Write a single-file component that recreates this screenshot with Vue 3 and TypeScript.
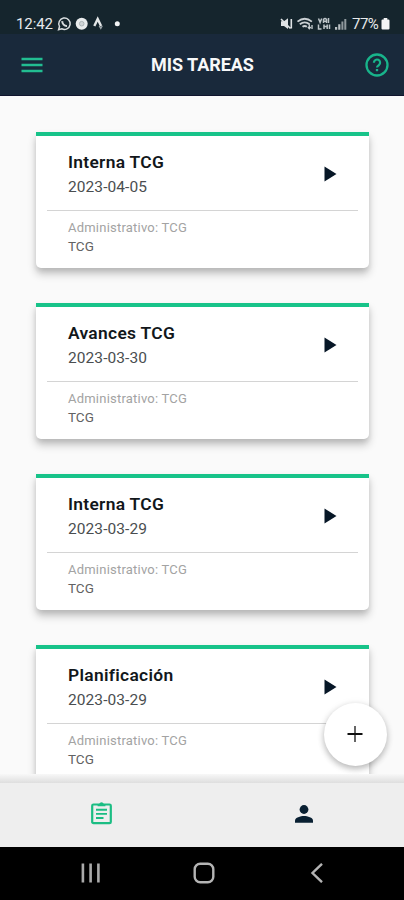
<script setup lang="ts">
interface Task {
  title: string
  date: string
  kind: string
  client: string
}

const tasks: Task[] = [
  { title: 'Interna TCG', date: '2023-04-05', kind: 'Administrativo: TCG', client: 'TCG' },
  { title: 'Avances TCG', date: '2023-03-30', kind: 'Administrativo: TCG', client: 'TCG' },
  { title: 'Interna TCG', date: '2023-03-29', kind: 'Administrativo: TCG', client: 'TCG' },
  { title: 'Planificación', date: '2023-03-29', kind: 'Administrativo: TCG', client: 'TCG' },
]
</script>

<template>
  <div class="screen">
    <div class="status">
      <span class="clock">12:42</span>
      <svg class="status-left" width="64" height="16" viewBox="0 0 64 16">
        <g fill="none" stroke="#d9dee0" stroke-width="1.5">
          <path d="M1.600 13.700l.9-3.200a5.700 5.700 0 1 1 2.200 2.200z" />
          <path d="M5.300 5.200c-.3 2.600 2.200 5 4.700 4.800" stroke-width="2" />
        </g>
        <circle cx="24.700" cy="7.700" r="6" fill="#e8ebec" />
        <circle cx="24.700" cy="7.700" r="2.300" fill="#d0d5d7" stroke="#a0a8ab" stroke-width=".8" />
        <path d="M37.300 10l3.400-7 3.400 7" fill="none" stroke="#e4e7e8" stroke-width="2.400" />
        <path d="M42.200 9.800l1.600 2.600 1.500-2.600" fill="none" stroke="#9aa3a7" stroke-width="1.300" />
        <circle cx="60.300" cy="7.700" r="2.500" fill="#f3f4f5" />
      </svg>
      <svg class="status-right" width="68" height="16" viewBox="0 0 68 16">
        <path d="M1 5.300h3l4-3v10.800L4 10H1z" fill="#dfe3e5" />
        <path d="M1 3l9.500 9.500M11.300 3v9.500" stroke="#dfe3e5" stroke-width="1.600" />
        <g fill="none" stroke="#cbd1d4" stroke-width="1.800">
          <path d="M17.500 5.600q7.200-5.600 14.400 0M19.800 8.300q4.900-3.800 9.800 0M22.500 10.800q2.200-1.600 4.400 0" />
          <path d="M29.300 8.200v4.500M27.900 11l1.400 1.800 1.400-1.800M32 13V9" stroke-width="1.300" />
        </g>
        <g fill="none" stroke="#bcc4c8" stroke-width="1.500">
          <path d="M38.500 2.500l1.600 4 1.600-4M43.500 7V3.500q1.500-2 3 0V7M43.500 5.300h3M48.500 2v5M38.500 8.500v4.500h3M44 8.500v4.500M44 10.500h3.200M47.200 8.500v4.500M49.500 8.500v4.500" />
        </g>
        <path d="M55 11h2.200v2.800H55zM58.200 8.200h2.200v5.600h-2.200z" fill="#b9c0c3" />
        <path d="M61.400 5.500h2v8.300h-2zM64.300 3h2v10.800h-2z" fill="#8f999d" />
      </svg>
      <span class="percent">77%</span>
      <svg class="battery" width="9" height="14" viewBox="0 0 9 14">
        <path d="M2.700 1h3.600v1.600h1q1.200 0 1.200 1v7.800q0 1-1.200 1H1.700q-1.200 0-1.200-1V3.600q0-1 1.200-1h1z" fill="#f3f4f5" />
      </svg>
    </div>

    <header class="bar">
      <svg class="menu" width="22" height="16" viewBox="0 0 22 16">
        <path d="M.5 2h21M.5 8h21M.5 14h21" stroke="#22bd91" stroke-width="2.300" />
      </svg>
      <h1>MIS TAREAS</h1>
      <svg class="help" width="24" height="24" viewBox="0 0 24 24" fill="none" stroke="#18b48b">
        <circle cx="12" cy="12" r="10.500" stroke-width="2.300" />
        <path d="M8.900 9.700a3.100 3.100 0 1 1 5.100 2.300c-1.200.9-2 1.300-2 2.600" stroke-width="2.200" />
        <path d="M12 16v2.200" stroke-width="2.300" />
      </svg>
    </header>

    <main class="list">
      <article v-for="(task, i) in tasks" :key="i" class="card">
        <div class="top">
          <div>
            <h2>{{ task.title }}</h2>
            <p class="date">{{ task.date }}</p>
          </div>
          <svg class="play" width="13" height="16" viewBox="0 0 13 16">
            <path d="M.5.500L12.500 8 .5 15.500z" fill="#071727" />
          </svg>
        </div>
        <div class="details">
          <p class="kind">{{ task.kind }}</p>
          <p class="client">{{ task.client }}</p>
        </div>
      </article>
      <button class="add" aria-label="Agregar tarea">
        <svg width="16" height="16" viewBox="0 0 16 16">
          <path d="M8 0v16" stroke="#666" stroke-width="2" />
          <path d="M.5 8h15" stroke="#111" stroke-width="2" />
        </svg>
      </button>
    </main>

    <div class="edge"></div>
    <nav class="tabs">
      <div class="tab">
        <svg class="clipboard" width="21" height="24" viewBox="0 0 21 24" fill="none" stroke="#1bbd83">
          <rect x="1.200" y="3.500" width="18.600" height="18.700" rx="1.300" stroke-width="2.200" />
          <path d="M6.600 2.900h1.600a2.400 2.400 0 0 1 4.600 0h1.600v2.300H6.600z" fill="#1bbd83" stroke="none" />
          <path d="M5 8.800h11M5 12.900h11M5 17h7.500" stroke-width="1.900" />
        </svg>
      </div>
      <div class="tab">
        <svg class="person" width="18" height="18" viewBox="0 0 18 18" fill="#092032">
          <circle cx="9" cy="4.500" r="4.400" />
          <path d="M0 17.800v-2.200c0-3 5.500-4.600 9-4.600s9 1.600 9 4.600v2.200z" />
        </svg>
      </div>
    </nav>

    <div class="system">
      <svg width="20" height="20" viewBox="0 0 20 20">
        <path d="M1.900.5v19M9.600.5v19M17.400.5v19" stroke="#aaa" stroke-width="2.600" />
      </svg>
      <svg width="22" height="22" viewBox="0 0 22 22">
        <rect x="1.700" y="1.700" width="18.600" height="18.600" rx="5.500" fill="none" stroke="#b4b4b4" stroke-width="2.400" />
      </svg>
      <svg width="14" height="20" viewBox="0 0 14 20">
        <path d="M12 .8L2.500 10l9.500 9.200" fill="none" stroke="#b4b4b4" stroke-width="2.400" />
      </svg>
    </div>
  </div>
</template>

<style>
body {
  margin: 0;
}
</style>

<style scoped>
.screen {
  width: 404px;
  height: 900px;
  display: flex;
  flex-direction: column;
  overflow: hidden;
  background: #fafafa;
  font-family: Roboto, "Liberation Sans", sans-serif;
}

h1,
h2,
p {
  margin: 0;
}

svg {
  display: block;
  flex: none;
}

.status {
  flex: none;
  height: 34px;
  box-sizing: border-box;
  padding: 13px 14px 0 16px;
  display: flex;
  background: #15252d;
  color: #e7eaec;
  font-size: 15px;
  line-height: 22px;
}

.clock {
  width: 37px;
  letter-spacing: -0.1px;
}

.status-left {
  margin: 3px 0 0 4px;
}

.status-right {
  margin: 3px 4px 0 auto;
}

.percent {
  width: 28px;
  letter-spacing: -0.5px;
}

.battery {
  margin: 4px 0 0 1px;
}

.bar {
  flex: none;
  height: 62px;
  box-sizing: border-box;
  padding: 0 15px 0 21px;
  display: grid;
  grid-template-columns: 24px 1fr 24px;
  align-items: center;
  background: #19293b;
  border-bottom: 1px solid #10152e;
}

h1 {
  text-align: center;
  padding-right: 5px;
  color: #f7f8f9;
  font-size: 18px;
  font-weight: 700;
  line-height: 24px;
  letter-spacing: -0.05px;
}

.help {
  margin-top: 1px;
}

.list {
  position: relative;
  flex: none;
  height: 678px;
  box-sizing: border-box;
  padding: 36px 35px 0 36px;
  display: flex;
  flex-direction: column;
  gap: 35px;
  overflow: hidden;
}

.card {
  flex: none;
  height: 136px;
  box-sizing: border-box;
  border-top: 4px solid #17c389;
  border-radius: 0 0 5px 5px;
  padding: 0 11px;
  background: #fff;
  box-shadow: 0 6px 9px rgba(0, 0, 0, 0.22), 0 3px 5px rgba(0, 0, 0, 0.08);
}

.top {
  height: 75px;
  box-sizing: border-box;
  padding: 14px 21px 0 21px;
  display: flex;
  justify-content: space-between;
  border-bottom: 1px solid #d4d4d4;
}

h2 {
  color: #12171b;
  font-size: 17.4px;
  font-weight: 600;
  line-height: 25px;
  letter-spacing: 0.3px;
}

.date {
  color: #4a4e50;
  font-size: 15.5px;
  line-height: 24px;
  letter-spacing: 0.08px;
}

.play {
  margin-top: 16px;
}

.details {
  padding: 7px 21px 0;
  font-size: 13px;
  line-height: 19px;
}

.kind {
  color: #a3a3a3;
  letter-spacing: 0.22px;
}

.client {
  color: #626262;
  font-size: 13.5px;
}

.add {
  position: absolute;
  right: 17px;
  bottom: 8px;
  width: 63px;
  height: 63px;
  padding: 0 1px 1px 0;
  display: grid;
  place-items: center;
  border: 0;
  border-radius: 50%;
  background: #fff;
  box-shadow: 0 3px 6px rgba(0, 0, 0, 0.24), 0 1px 8px rgba(0, 0, 0, 0.08);
}

.edge {
  flex: none;
  height: 9px;
  background: linear-gradient(#f8f8f8, #dedede);
}

.tabs {
  flex: none;
  height: 64px;
  display: grid;
  grid-template-columns: 1fr 1fr;
  background: #eee;
}

.tab {
  display: flex;
  justify-content: center;
  align-items: flex-start;
}

.clipboard {
  margin-top: 18px;
}

.person {
  margin: 22px 0 0 1px;
}

.system {
  flex: none;
  height: 53px;
  box-sizing: border-box;
  padding: 0 80px 1px 81px;
  display: grid;
  grid-template-columns: 20px 1fr 14px;
  align-items: center;
  background: #000;
}

.system svg:nth-child(2) {
  justify-self: center;
  margin-right: 4px;
}
</style>
